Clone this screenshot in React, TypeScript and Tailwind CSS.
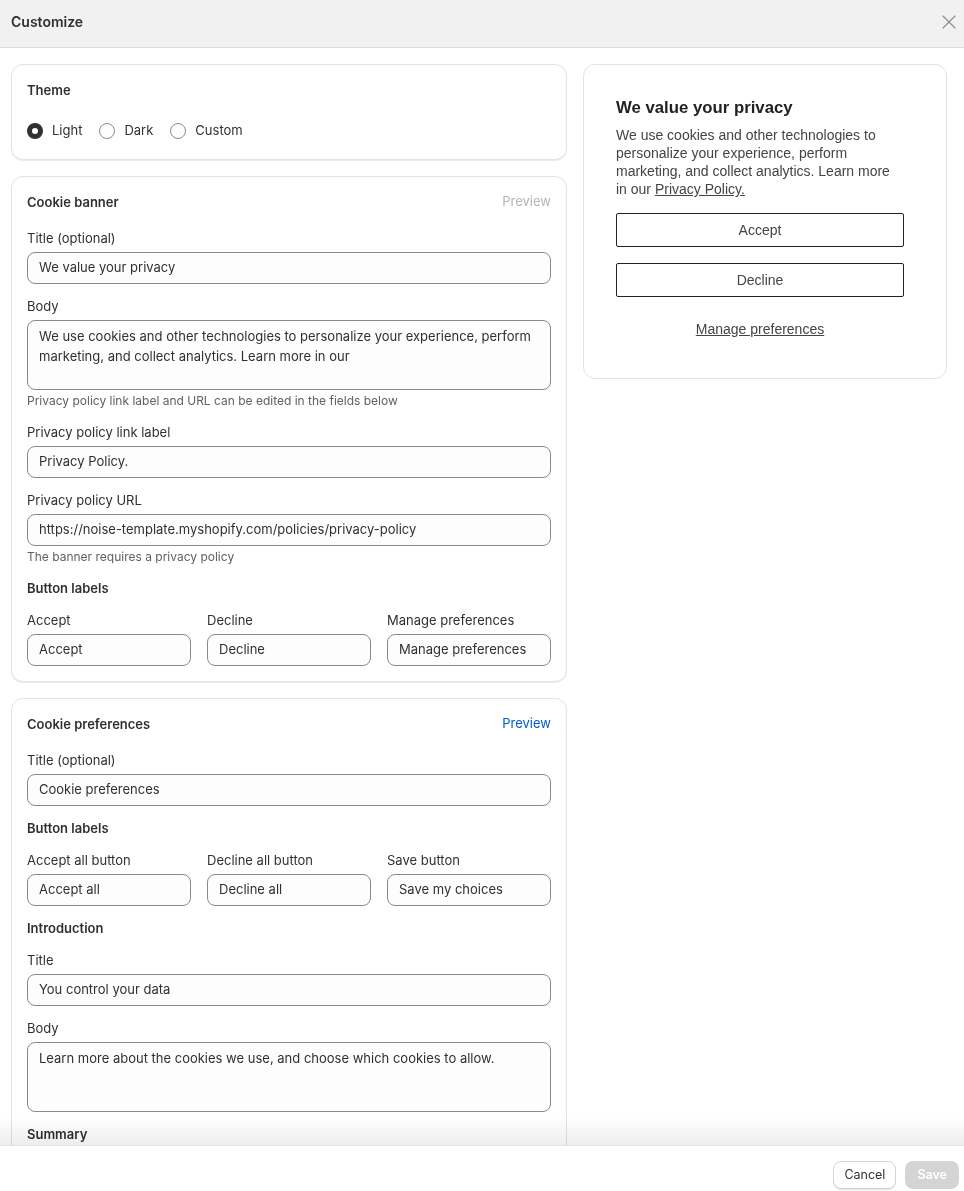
import { X } from "lucide-react";

function Field({ label, value, help }: { label: string; value: string; help?: string }) {
  return (
    <div className="flex flex-col">
      <label className="text-[13px] leading-5 text-[#303030]">{label}</label>
      <div className="mt-1 h-8 flex items-center px-[11px] rounded-lg border border-[#8a8a8a] bg-[#fdfdfd] text-[13px] text-[#303030] whitespace-nowrap overflow-hidden">
        {value}
      </div>
      {help && <p className="mt-0.5 text-[12px] leading-[18px] text-[#616161]">{help}</p>}
    </div>
  );
}

function Area({ label, value, help }: { label: string; value: string; help?: string }) {
  return (
    <div className="flex flex-col">
      <label className="text-[13px] leading-5 text-[#303030]">{label}</label>
      <div className="mt-1 h-[70px] px-[11px] py-[5px] rounded-lg border border-[#8a8a8a] bg-[#fdfdfd] text-[13px] leading-5 text-[#303030]">
        {value}
      </div>
      {help && <p className="mt-0.5 text-[12px] leading-[18px] text-[#616161]">{help}</p>}
    </div>
  );
}

function Radio({ label, checked }: { label: string; checked?: boolean }) {
  return (
    <div className="flex items-center gap-[9px]">
      <span
        className={
          checked
            ? "w-4 h-4 rounded-full border-[5px] border-[#303030] bg-white"
            : "w-4 h-4 rounded-full border border-[#8a8a8a] bg-[#fdfdfd]"
        }
      />
      <span className="text-[13px] text-[#303030]">{label}</span>
    </div>
  );
}

const card = "bg-white rounded-xl border border-[#e3e3e3] shadow-[0_1px_0_rgba(0,0,0,0.08)] p-[15px]";

export default function App() {
  return (
    <div className="h-screen flex flex-col bg-white font-['Inter',sans-serif] text-[#303030] overflow-hidden">
      {/* Header */}
      <div className="h-12 shrink-0 flex items-center justify-between pb-1 pl-[11px] pr-[3px] bg-[#f1f1f1] border-b border-[#dcdcdc]">
        <h1 className="text-[14px] font-semibold text-[#303030]">Customize</h1>
        <X className="w-6 h-6 text-[#8a8a8a]" strokeWidth={1.1} />
      </div>

      {/* Body */}
      <div className="relative flex-1 overflow-hidden">
        <div className="grid grid-cols-[556px_364px] gap-4 pl-[11px] pt-4 items-start">
          <div className="flex flex-col gap-4">
            {/* Theme */}
            <div className={card}>
              <h2 className="text-[13px] leading-5 font-semibold">Theme</h2>
              <div className="mt-[21px] mb-[3px] flex items-center gap-[17px]">
                <Radio label="Light" checked />
                <Radio label="Dark" />
                <Radio label="Custom" />
              </div>
            </div>

            {/* Cookie banner */}
            <div className={card}>
              <div className="flex items-center justify-between">
                <h2 className="text-[13px] leading-5 font-semibold">Cookie banner</h2>
                <span className="text-[13px] text-[#b5b5b5]">Preview</span>
              </div>
              <div className="mt-4 flex flex-col gap-3">
                <Field label="Title (optional)" value="We value your privacy" />
                <Area
                  label="Body"
                  value="We use cookies and other technologies to personalize your experience, perform marketing, and collect analytics. Learn more in our"
                  help="Privacy policy link label and URL can be edited in the fields below"
                />
                <Field label="Privacy policy link label" value="Privacy Policy." />
                <Field
                  label="Privacy policy URL"
                  value="https://noise-template.myshopify.com/policies/privacy-policy"
                  help="The banner requires a privacy policy"
                />
                <h3 className="text-[13px] leading-5 font-semibold">Button labels</h3>
                <div className="grid grid-cols-3 gap-4">
                  <Field label="Accept" value="Accept" />
                  <Field label="Decline" value="Decline" />
                  <Field label="Manage preferences" value="Manage preferences" />
                </div>
              </div>
            </div>

            {/* Cookie preferences */}
            <div className={card}>
              <div className="flex items-center justify-between">
                <h2 className="text-[13px] leading-5 font-semibold">Cookie preferences</h2>
                <span className="text-[13px] text-[#005bd3]">Preview</span>
              </div>
              <div className="mt-4 flex flex-col gap-3">
                <Field label="Title (optional)" value="Cookie preferences" />
                <h3 className="text-[13px] leading-5 font-semibold">Button labels</h3>
                <div className="grid grid-cols-3 gap-4">
                  <Field label="Accept all button" value="Accept all" />
                  <Field label="Decline all button" value="Decline all" />
                  <Field label="Save button" value="Save my choices" />
                </div>
                <h3 className="text-[13px] leading-5 font-semibold">Introduction</h3>
                <Field label="Title" value="You control your data" />
                <Area label="Body" value="Learn more about the cookies we use, and choose which cookies to allow." />
                <h3 className="text-[13px] leading-5 font-semibold">Summary</h3>
              </div>
            </div>
          </div>

          {/* Preview */}
          <div className="bg-white rounded-xl border border-[#e3e3e3] pt-[30px] pb-[38px] pl-8 pr-[42px] font-['Liberation_Sans',Arial,sans-serif]">
            <h2 className="text-[16.75px] font-bold text-[#222]">We value your privacy</h2>
            <p className="mt-[6px] max-w-[278px] text-[14px] leading-[18px] text-[#444]">
              We use cookies and other technologies to personalize your experience, perform marketing, and collect
              analytics. Learn more in our <span className="underline">Privacy Policy.</span>
            </p>
            <div className="mt-[15px] flex flex-col gap-4">
              <div className="h-[34px] flex items-center justify-center border border-[#222] rounded-[2px] text-[14px] text-[#444]">
                Accept
              </div>
              <div className="h-[34px] flex items-center justify-center border border-[#222] rounded-[2px] text-[14px] text-[#444]">
                Decline
              </div>
            </div>
            <div className="mt-[22px] text-center text-[14px] text-[#444] underline">Manage preferences</div>
          </div>
        </div>
        <div className="absolute left-0 right-0 bottom-0 h-7 bg-gradient-to-b from-white to-[#ededed] mix-blend-multiply" />
      </div>

      {/* Footer */}
      <div className="h-[46px] shrink-0 flex items-start justify-end gap-[9px] pt-[15px] pr-[5px] border-t border-[#e3e3e3] bg-white">
        <button className="h-7 px-[10px] rounded-lg border border-[#d4d4d4] bg-white text-[12.5px] text-[#303030] shadow-[0_1px_0_rgba(0,0,0,0.1)]">
          Cancel
        </button>
        <button className="h-7 px-3 rounded-lg bg-[#d4d4d4] text-[12.5px] font-semibold text-white">Save</button>
      </div>
    </div>
  );
}
